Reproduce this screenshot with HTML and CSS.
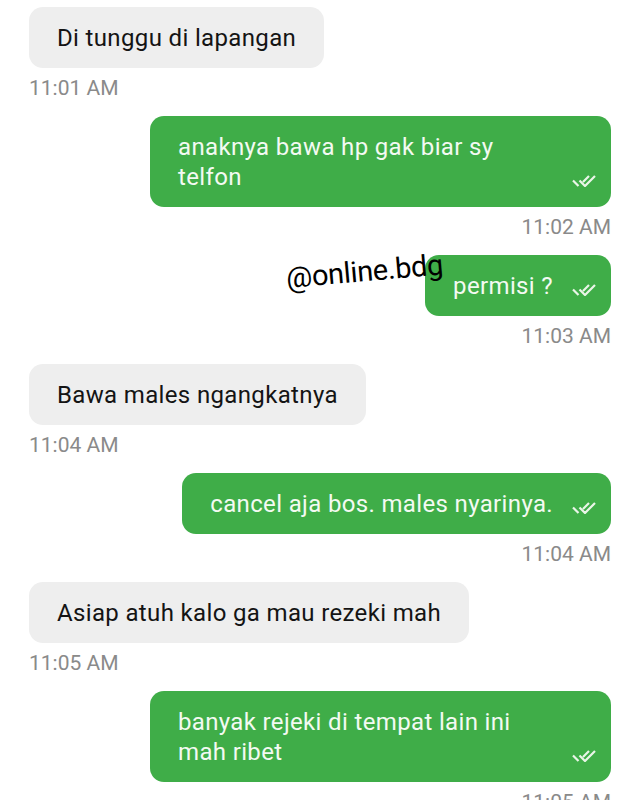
FILE: index.html
```html
<!DOCTYPE html>
<html>
<head>
<meta charset="utf-8">
<link rel="stylesheet" href="styles.css">
</head>
<body>
<div class="chat">
  <div class="msg in">
    <div class="bubble">Di tunggu di lapangan</div>
    <div class="time">11:01 AM</div>
  </div>
  <div class="msg out">
    <div class="bubble"><span class="text">anaknya bawa hp gak biar sy telfon</span><svg class="tick" viewBox="0 0 24 14"><path d="M1 7.5 L6.5 13 M7.5 7.5 L13 13 L23 3 M11 9 L17 3"/></svg></div>
    <div class="time">11:02 AM</div>
  </div>
  <div class="msg out">
    <div class="bubble"><span class="text">permisi ?</span><svg class="tick" viewBox="0 0 24 14"><path d="M1 7.5 L6.5 13 M7.5 7.5 L13 13 L23 3 M11 9 L17 3"/></svg></div>
    <div class="time">11:03 AM</div>
    <div class="watermark">@online.bdg</div>
  </div>
  <div class="msg in">
    <div class="bubble">Bawa males ngangkatnya</div>
    <div class="time">11:04 AM</div>
  </div>
  <div class="msg out">
    <div class="bubble"><span class="text">cancel aja bos. males nyarinya.</span><svg class="tick" viewBox="0 0 24 14"><path d="M1 7.5 L6.5 13 M7.5 7.5 L13 13 L23 3 M11 9 L17 3"/></svg></div>
    <div class="time">11:04 AM</div>
  </div>
  <div class="msg in">
    <div class="bubble">Asiap atuh kalo ga mau rezeki mah</div>
    <div class="time">11:05 AM</div>
  </div>
  <div class="msg out">
    <div class="bubble"><span class="text">banyak rejeki di tempat lain ini mah ribet</span><svg class="tick" viewBox="0 0 24 14"><path d="M1 7.5 L6.5 13 M7.5 7.5 L13 13 L23 3 M11 9 L17 3"/></svg></div>
    <div class="time">11:05 AM</div>
  </div>
</div>
</body>
</html>
```

FILE: styles.css
```css
html, body {
  margin: 0;
  padding: 0;
  background: #ffffff;
  overflow: hidden;
}
body {
  font-family: Roboto, "Liberation Sans", sans-serif;
}
.chat {
  display: flex;
  flex-direction: column;
  padding: 7px 29px 0 29px;
}
.msg {
  position: relative;
  display: flex;
  flex-direction: column;
  align-items: flex-start;
}
.msg.out {
  align-items: flex-end;
}
.bubble {
  font-size: 24px;
  line-height: 30px;
  letter-spacing: 0.35px;
  padding: 16px 28px 15px 28px;
  border-radius: 14px;
  background: #eeeeee;
  color: #141414;
}
.msg.out .bubble {
  display: flex;
  align-items: flex-end;
  max-width: 461px;
  box-sizing: border-box;
  padding: 16px 15px 15px 28px;
  background: #3fad48;
  color: #f3faf2;
}
.text {
  min-width: 0;
}
.tick {
  flex: none;
  width: 24px;
  height: 14px;
  margin-left: 19px;
  margin-bottom: 5px;
  fill: none;
  stroke: #eaf5e8;
  stroke-width: 2.2;
}
.time {
  font-size: 21px;
  line-height: 24px;
  color: #8a8a8a;
  margin: 8px 0 16px 0;
}
.watermark {
  position: absolute;
  left: 258px;
  top: 6px;
  font-size: 29px;
  line-height: 34px;
  color: #000000;
  transform: rotate(-5deg);
  transform-origin: 0 27px;
  letter-spacing: -0.3px;
}
```
